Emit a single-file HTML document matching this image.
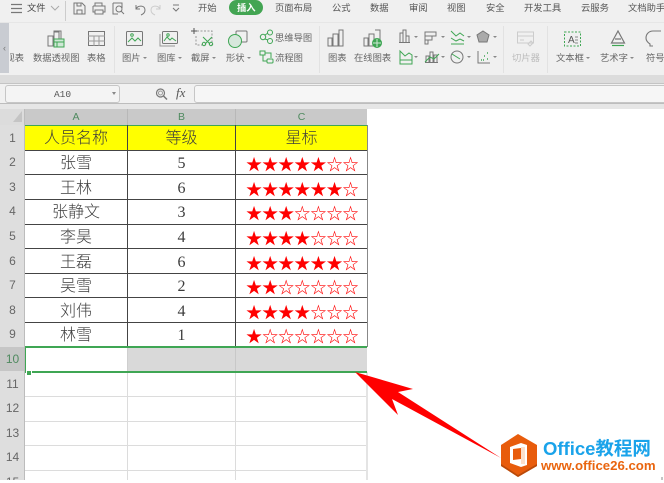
<!DOCTYPE html>
<html lang="zh"><head><meta charset="utf-8"><title>WPS</title>
<style>
html,body{margin:0;padding:0;background:#fff}
#p{position:relative;width:664px;height:483px;overflow:hidden;background:#fff;font-family:"Liberation Sans","Noto Sans CJK SC",sans-serif}
#p div{position:absolute;white-space:nowrap}
.t{font-size:9.3px;color:#555;line-height:12px;top:2px}
.l{font-size:9.3px;color:#666;line-height:12px}
.l i{display:inline-block;width:0;height:0;border:2px solid transparent;border-top:2.5px solid #888;border-bottom:0;margin-left:2px;vertical-align:2px}
.c{font-family:"Liberation Serif","Noto Sans CJK SC",serif;font-size:16px;font-weight:300;color:#3c3c3c;text-align:center;height:24px;line-height:27px;letter-spacing:0}
.a{left:25px;width:102px}.b{left:128px;width:107px}
.s{left:246px;width:120px;font-family:"Noto Sans CJK SC",sans-serif;font-size:16.100px;color:#f00;height:24px;line-height:27px;letter-spacing:0}
.r{left:0;width:25px;text-align:center;font-size:12px;color:#666;height:24px;line-height:25px;background:#dedede}
.h{height:1.4px;left:25px;width:342px;background:#444}
.g{height:1px;left:25px;width:342px;background:#dcdcdc}
svg{position:absolute;left:0;top:0}
</style></head><body><div id="p">
<div style="left:0;top:0;width:664px;height:75px;background:#f0f0f0"></div>
<div style="left:0;top:22px;width:664px;height:1px;background:#e6e6e6"></div>
<div style="left:0;top:75px;width:664px;height:8px;background:#dcdcdc"></div>
<div style="left:0;top:83px;width:664px;height:21px;background:#f1f1f1;border-top:1px solid #c4c4c4;border-bottom:1px solid #bdbdbd;box-sizing:border-box"></div>
<div style="left:0;top:104px;width:664px;height:5px;background:#e6e6e6"></div>
<div style="left:0;top:23px;width:9px;height:50px;background:#c9ccd2;color:#777;font-size:9px;line-height:50px;text-align:center">‹</div>
<div style="left:229px;top:0;width:34px;height:15px;border-radius:8px;background:#43a553"></div>

<div class="t" style="left:27px;color:#444">文件</div>
<div class="t" style="left:198px">开始</div>
<div class="t" style="left:237px;color:#fff;font-weight:bold">插入</div>
<div class="t" style="left:275px">页面布局</div>
<div class="t" style="left:332px">公式</div>
<div class="t" style="left:370px">数据</div>
<div class="t" style="left:409px">审阅</div>
<div class="t" style="left:447px">视图</div>
<div class="t" style="left:486px">安全</div>
<div class="t" style="left:524px">开发工具</div>
<div class="t" style="left:581px">云服务</div>
<div class="t" style="left:628px">文档助手</div>

<div class="l" style="left:10px;top:52px;width:14px;overflow:hidden;direction:rtl">视表</div>
<div class="l" style="left:33px;top:52px">数据透视图</div>
<div class="l" style="left:87px;top:52px">表格</div>
<div class="l" style="left:122px;top:52px">图片<i></i></div>
<div class="l" style="left:157px;top:52px">图库<i></i></div>
<div class="l" style="left:191px;top:52px">截屏<i></i></div>
<div class="l" style="left:226px;top:52px">形状<i></i></div>
<div class="l" style="left:275px;top:32px">思维导图</div>
<div class="l" style="left:275px;top:52px">流程图</div>
<div class="l" style="left:328px;top:52px">图表</div>
<div class="l" style="left:354px;top:52px">在线图表</div>
<div class="l" style="left:512px;top:52px;color:#bbb">切片器</div>
<div class="l" style="left:556px;top:52px">文本框<i></i></div>
<div class="l" style="left:600px;top:52px">艺术字<i></i></div>
<div class="l" style="left:646px;top:52px">符号</div>

<svg width="664" height="110" viewBox="0 0 664 110" fill="none" stroke="#777" stroke-width="1">
<path d="M11 4.500h11M11 8.500h11M11 12.500h11" stroke-width="1.200"/>
<path d="M51 6l4 4 4-4" stroke="#aaa"/>
<path d="M65.500 1v20" stroke="#ccc"/>
<path d="M74 3h8l3 3v8H74zM77 3v3h4V3M77 14v-4h5v4"/>
<path d="M95 6V3h7v3M93 6h12v6h-2M95 12h-2V6M95 10h8v4h-8z"/>
<path d="M113 3h9v5M113 3v11h5"/><circle cx="119" cy="9" r="3"/><path d="M121 11l3 3"/>
<path d="M136 5v4h4M136 9c2-4 9-4 9 1 0 3-2 4-4 5"/>
<path d="M160 5v4h-4M160 9c-2-4-9-4-9 1 0 3 2 4 4 5" stroke="#ccc"/>
<path d="M173 5h6M173 8l3 3 3-3" stroke="#777"/>

<path d="M48 36h5v10h-5zM54 32h5v14h-5z"/><path d="M54 32v-1h7v8"/>
<rect x="54" y="39" width="10" height="8" fill="#cfe8d6" stroke="#3fa654"/><path d="M54 42h10M57 42v5" stroke="#3fa654"/>
<rect x="88.500" y="31.500" width="16" height="14"/><path d="M88 36h17M88 41h17M94 36v10M99 36v10" stroke="#999"/>
<path d="M114.500 26v47M319.500 26v47M503.500 26v47M547.500 26v47" stroke="#e2e2e2"/>
<rect x="126.500" y="31.500" width="16" height="14" rx="1"/><path d="M128 42l4-4 3 3 3-3 3 3" stroke="#3fa654"/><circle cx="132" cy="35" r="1.300" stroke="#3fa654"/>
<rect x="162.500" y="31.500" width="15" height="12" rx="1"/><path d="M160 34v12h15" stroke="#999"/><path d="M164 41l3-4 3 3 2-2 4 3" stroke="#3fa654"/><circle cx="168" cy="35" r="1.200" stroke="#3fa654"/>
<path d="M197 31h15v14M196 36v9h9" stroke="#999" stroke-dasharray="2 1.500"/><path d="M194 28v6M191 31h6" stroke="#555"/>
<path d="M203 37l7 7M212 37l-7 7" stroke="#3fa654"/><circle cx="204" cy="44" r="1.700" stroke="#3fa654"/><circle cx="211" cy="44" r="1.700" stroke="#3fa654"/>
<rect x="236" y="31" width="11" height="11" rx="1"/><circle cx="235" cy="41" r="6.500" fill="#d7e7dc" stroke="#3fa654"/>
<g stroke="#3fa654"><circle cx="263" cy="37" r="2.700"/><circle cx="270" cy="32.500" r="2.500"/><circle cx="270" cy="41" r="2.500"/><path d="M265 35l3-2M265 39l3 1"/>
<rect x="260" y="51" width="5" height="4"/><rect x="267" y="59" width="6" height="4" rx="1"/><path d="M263 55v6h4M265 53h6v5"/></g>

<path d="M328 38h4v8h-4zM333 34h5v12h-5zM339 30h4v16h-4z"/>
<path d="M364 38h4v8h-4zM369 34h5v12h-5zM375 30h5v10"/><circle cx="377" cy="43" r="4.500" fill="#3fa654" stroke="#3fa654"/><path d="M373 43h8M377 39v8" stroke="#cfe8d6"/>
<path d="M400 42V33h3v9M403 42V30h3v12M406 42v-6h3v6M399 42.500h11"/>
<path d="M425 32h11v4h-11zM425 36h7v4h-7zM425 40h3v4h-3z"/>
<path d="M451 31l5 5 4-3 4 3M451 38l5 3 4-2 4 2" stroke="#3fa654"/><path d="M451 44h13" stroke="#3fa654"/>
<path d="M483 31l6 4-2 7h-8l-2-7z" fill="#aaa"/>
<path d="M400 51l5 5 4-3 3 2v9h-12z" stroke="#3fa654"/><path d="M400 60h12" stroke="#3fa654"/>
<path d="M426 62V56h3v6M430 62V52h3v10M434 62v-7h3v7M425 62.500h13"/><path d="M425 62l5-5 4 2 5-5" stroke="#3fa654"/>
<circle cx="457" cy="57" r="6"/><path d="M452 54l8 5" stroke="#3fa654"/>
<path d="M478 51v12h12"/><path d="M481 60h1M484 56h1M487 53h1M483 60h1M487 59h1" stroke="#3fa654" stroke-width="1.500"/>
<g fill="#888" stroke="none"><path d="M414 36h4l-2 2zM441 36h4l-2 2zM467 36h4l-2 2zM493 36h4l-2 2zM414 56h4l-2 2zM441 56h4l-2 2zM467 56h4l-2 2zM493 56h4l-2 2z"/></g>
<rect x="517.500" y="32" width="16" height="11" stroke="#ccc"/><path d="M517 36h17M520 40h4M528 44l3-3 2 2-3 3z" stroke="#ccc"/>
<rect x="564.500" y="32" width="16" height="14" stroke="#3fa654" stroke-dasharray="2 1.500"/><text x="568" y="43" font-size="10" fill="#555" stroke="none" font-family="Liberation Sans">A</text><path d="M575 37h3M575 40h3M575 43h3" stroke="#888"/>
<path d="M618 31l-6.500 12h13zM615 39h6" stroke-width="1.200"/><path d="M612 45.500h12" stroke="#3fa654" stroke-width="1.200"/>
<path d="M653 46h-3v-2c-3-2-4-4-4-6 0-4 3-7 7-7h8" stroke-width="1.100"/>
<circle cx="160.500" cy="93" r="4" stroke-width="1.200"/><circle cx="160.500" cy="93" r="2" stroke="#999"/><path d="M163.500 96l3.500 3.500" stroke-width="1.500"/>
</svg>
<div style="left:176px;top:85px;font-family:'Liberation Serif',serif;font-style:italic;font-size:13px;color:#555;line-height:16px">fx</div>
<div style="left:5px;top:85px;width:113px;height:16px;border:1px solid #c6c6c6;border-radius:3px;background:#f4f4f4;text-align:center;font-family:'Liberation Mono',monospace;font-size:9.500px;line-height:17px;color:#555">A10</div>
<div style="left:112px;top:92px;width:0;height:0;border:2px solid transparent;border-top:3px solid #888;border-bottom:0"></div>
<div style="left:194px;top:85px;width:480px;height:16px;border:1px solid #c6c6c6;border-radius:3px;background:#f6f6f6"></div>

<!-- sheet -->
<div style="left:0;top:109px;width:25px;height:16px;background:#dcdcdc"></div>
<svg width="664" height="483" viewBox="0 0 664 483"><path d="M22 111v11h-9z" fill="#c4c4c4"/></svg>
<div style="left:25px;top:109px;width:342px;height:16px;background:#c9c9c9"></div>
<div style="left:25px;top:109px;width:102px;text-align:center;color:#4f8a5f;font-size:10.500px;line-height:16px">A</div>
<div style="left:128px;top:109px;width:107px;text-align:center;color:#4f8a5f;font-size:10.500px;line-height:16px">B</div>
<div style="left:236px;top:109px;width:131px;text-align:center;color:#4f8a5f;font-size:10.500px;line-height:16px">C</div>
<div style="left:127px;top:109px;width:1px;height:16px;background:#b8b8b8"></div>
<div style="left:235px;top:109px;width:1px;height:16px;background:#b8b8b8"></div>

<div style="left:25px;top:125px;width:342px;height:25px;background:#ff0"></div>
<div style="left:25px;top:125px;width:342px;height:1px;background:#3fa654"></div>
<div style="left:0;top:125px;width:25px;height:355px;background:#dedede"></div>

<div style="left:25px;top:347px;width:103px;height:25px;background:#fff"></div>
<div style="left:128px;top:347px;width:239px;height:25px;background:#d9d9d9"></div>

<div class="h" style="top:149.500px"></div><div class="h" style="top:174px"></div><div class="h" style="top:198.500px"></div><div class="h" style="top:223.500px"></div><div class="h" style="top:248px"></div><div class="h" style="top:272.500px"></div><div class="h" style="top:297px"></div><div class="h" style="top:322px"></div>
<div class="g" style="top:396px"></div><div class="g" style="top:421px"></div><div class="g" style="top:445px"></div><div class="g" style="top:470px"></div>

<div style="left:127px;top:125px;width:1.400px;height:222px;background:#444"></div>
<div style="left:235px;top:125px;width:1.400px;height:222px;background:#444"></div>
<div style="left:366.500px;top:125px;width:1.400px;height:222px;background:#888"></div>
<div style="left:127px;top:347px;width:1px;height:25px;background:#cfcfcf"></div>
<div style="left:235px;top:347px;width:1px;height:25px;background:#c8c8c8"></div>
<div style="left:127px;top:372px;width:1px;height:108px;background:#dcdcdc"></div>
<div style="left:235px;top:372px;width:1px;height:108px;background:#dcdcdc"></div>
<div style="left:366px;top:372px;width:2px;height:108px;background:#e4e4e4"></div>

<div class="r" style="top:126px">1</div><div class="r" style="top:150px">2</div><div class="r" style="top:175px">3</div><div class="r" style="top:199px">4</div><div class="r" style="top:224px">5</div><div class="r" style="top:249px">6</div><div class="r" style="top:273px">7</div><div class="r" style="top:298px">8</div><div class="r" style="top:322px">9</div>
<div class="r" style="top:347px;background:#c6c6c6;color:#4f8a5f">10</div><div class="r" style="top:372px">11</div><div class="r" style="top:396px">12</div><div class="r" style="top:421px">13</div><div class="r" style="top:445px">14</div>
<div class="r" style="top:470px;height:10px;line-height:25px;overflow:hidden">15</div>
<div style="left:24px;top:109px;width:1px;height:371px;background:#bcbcbc"></div>

<div class="c a" style="top:125px">人员名称</div><div class="c b" style="top:125px">等级</div><div class="c" style="left:236px;width:131px;top:125px">星标</div>
<div class="c a" style="top:150px">张雪</div><div class="c b" style="top:150px">5</div><div class="s" style="top:150px">★★★★★☆☆</div>
<div class="c a" style="top:175px">王林</div><div class="c b" style="top:175px">6</div><div class="s" style="top:175px">★★★★★★☆</div>
<div class="c a" style="top:199px">张静文</div><div class="c b" style="top:199px">3</div><div class="s" style="top:199px">★★★☆☆☆☆</div>
<div class="c a" style="top:224px">李昊</div><div class="c b" style="top:224px">4</div><div class="s" style="top:224px">★★★★☆☆☆</div>
<div class="c a" style="top:249px">王磊</div><div class="c b" style="top:249px">6</div><div class="s" style="top:249px">★★★★★★☆</div>
<div class="c a" style="top:273px">吴雪</div><div class="c b" style="top:273px">2</div><div class="s" style="top:273px">★★☆☆☆☆☆</div>
<div class="c a" style="top:298px">刘伟</div><div class="c b" style="top:298px">4</div><div class="s" style="top:298px">★★★★☆☆☆</div>
<div class="c a" style="top:322px">林雪</div><div class="c b" style="top:322px">1</div><div class="s" style="top:322px">★☆☆☆☆☆☆</div>

<div style="left:25px;top:346px;width:342px;height:1.500px;background:#3fa654"></div>
<div style="left:25px;top:371px;width:342px;height:1.500px;background:#3fa654"></div>
<div style="left:25px;top:346px;width:1.200px;height:26px;background:#3fa654"></div>
<div style="left:26px;top:370px;width:4px;height:4px;background:#3fa654;border:1px solid #fff"></div>

<svg width="664" height="483" viewBox="0 0 664 483">
<polygon points="355,372 413,389 398,392 501,458 392,399 398,415" fill="#f00"/>
<polygon points="518,434 537,445 537,466 518,477 501,466 501,445" fill="#e85c0c"/>
<polygon points="501,464 518,475 537,464 537,466 518,477 501,466" fill="#b94a0a"/>
<path d="M510 447l11-4 6 2v20l-6 2-11-4zM513 449v11l8-1v-11z" fill="#fff" fill-rule="evenodd"/>
<path d="M521 447h4v17h-4z" fill="#fde0cc"/>
<path d="M662 477v3" stroke="#888"/>
</svg>
<div style="left:543px;top:436px;font-size:18.500px;font-weight:bold;color:#1aa3ea;line-height:26px;font-family:'Liberation Sans','Noto Sans CJK SC',sans-serif">Office教程网</div>
<div style="left:541px;top:459px;font-size:13.200px;font-weight:bold;color:#e9650f;line-height:14px">www.office26.com</div>
</div></body></html>
